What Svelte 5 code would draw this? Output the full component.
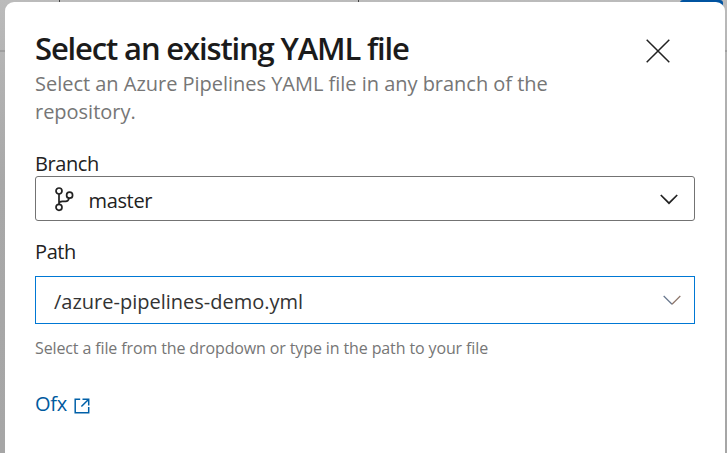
<script>
  let branch = $state('master');
  let path = $state('/azure-pipelines-demo.yml');
</script>

<div class="page">
  <div class="behind">
    <i class="tick first"></i>
    <i class="tick second"></i>
    <i class="primary"></i>
    <i class="rule"></i>
  </div>
  <section class="panel" role="dialog" aria-labelledby="title">
    <header>
      <div>
        <h1 id="title">Select an existing YAML file</h1>
        <p class="sub">Select an Azure Pipelines YAML file in any branch of the<br />repository.</p>
      </div>
      <button class="close" aria-label="Close">
        <svg width="24" height="24" viewBox="0 0 24 24"><path d="M.7.7 23.3 23.3M23.3.7.7 23.3" /></svg>
      </button>
    </header>
    <div class="label branch">Branch</div>
    <button class="field select">
      <svg class="git" width="20" height="26" viewBox="0 0 20 26">
        <circle cx="5" cy="4" r="3" /><circle cx="15.6" cy="8.2" r="3" /><circle cx="5" cy="20.3" r="3" />
        <path d="M5 7v10.3M5 17.3c0-2.2 1-2.9 3.4-2.9h3.2c2 0 3-1 3.4-3.2" />
      </svg>
      <span class="value">{branch}</span>
      <svg class="chev" width="18" height="11" viewBox="0 0 18 11"><path d="m.8 1 8.2 8.2L17.2 1" /></svg>
    </button>
    <div class="label path">Path</div>
    <div class="field combo">
      <span class="value">{path}</span>
      <svg class="chev" width="18" height="11" viewBox="0 0 18 11"><path class="w" d="m.7 1 8.3 8.2" /><path class="e" d="M9 9.2 17.3 1" /></svg>
    </div>
    <p class="hint">Select a file from the dropdown or type in the path to your file</p>
    <a href="#ofx"><span>Ofx</span>
      <svg width="16" height="16" viewBox="0 0 16 16"><path d="M6.2 1.2H1.2v13.5h13.5V9M8.5 1.2h6.2v6.2M14.7 1.2 7.4 8.5" /></svg>
    </a>
  </section>
</div>

<style>
  .page {
    position: relative;
    box-sizing: border-box;
    width: 727px;
    height: 453px;
    padding: 2px 2px 0 5px;
    overflow: hidden;
    background: linear-gradient(#bbb, #b3b3b3 15%, #a8a8a8 40%, #a6a6a6);
    font-family: "Open Sans", "Noto Sans", sans-serif;
    color: #222;
  }
  .behind { position: absolute; inset: 0; }
  .behind i { position: absolute; top: 0; }
  .tick { width: 1px; height: 3px; background: #444; }
  .first { left: 59px; }
  .second { left: 358px; }
  .primary { left: 680px; width: 43px; height: 9px; background: #0053a0; border-radius: 3px 3px 0 0; }
  .behind .rule { top: 50px; width: 727px; height: 2px; background: #9f9f9f; }
  .panel {
    position: relative;
    box-sizing: border-box;
    height: 451px;
    padding: 28px 30px 0;
    background: #fff;
    border-radius: 9px 9px 0 0;
  }
  header { display: flex; justify-content: space-between; height: 120px; }
  h1 { margin: 0; font-size: 31px; line-height: 36px; font-weight: 600; letter-spacing: -1.15px; color: #1b1b1b; white-space: nowrap; }
  p { margin: 0; }
  .sub { font-size: 20px; line-height: 28px; letter-spacing: -.02px; color: #767676; margin-top: 4px; white-space: nowrap; }
  button { font: inherit; color: inherit; background: none; border: 0; padding: 0; text-align: left; }
  .close { width: 24px; height: 24px; margin: 9px 25px 0 0; }
  svg { display: block; fill: none; stroke: #222; stroke-width: 1.5; flex: none; }
  .label { font-size: 20px; line-height: 28px; letter-spacing: -.4px; }
  .branch { height: 26px; }
  .field { display: flex; align-items: center; box-sizing: border-box; width: 660px; font-size: 20px; }
  .select { height: 45px; border: 1px solid #737373; border-radius: 3px; padding: 0 16px 0 18px; letter-spacing: -.35px; }
  .git { margin: 2px 14.5px 0 0; stroke-width: 1.7; }
  .value { flex: 1; line-height: 28px; padding-top: 4px; }
  .select .chev { stroke-width: 1.7; margin-top: 2px; }
  .path { margin-top: 17px; height: 38px; }
  .combo { height: 48px; border: 1px solid #0078d4; padding: 0 13.5px 0 18px; color: #333; }
  .combo .chev { stroke-width: 1.2; }
  .w { stroke: #66758c; }
  .e { stroke: #8c7468; }
  .hint { font-size: 16px; line-height: 22px; margin-top: 13px; letter-spacing: -.12px; color: #767676; white-space: nowrap; }
  a { display: flex; align-items: center; margin-top: 31px; font-size: 20px; line-height: 28px; letter-spacing: -.3px; color: #005a9e; text-decoration: none; }
  a svg { stroke: #0060a8; margin: 3px 0 0 7.5px; }
</style>
